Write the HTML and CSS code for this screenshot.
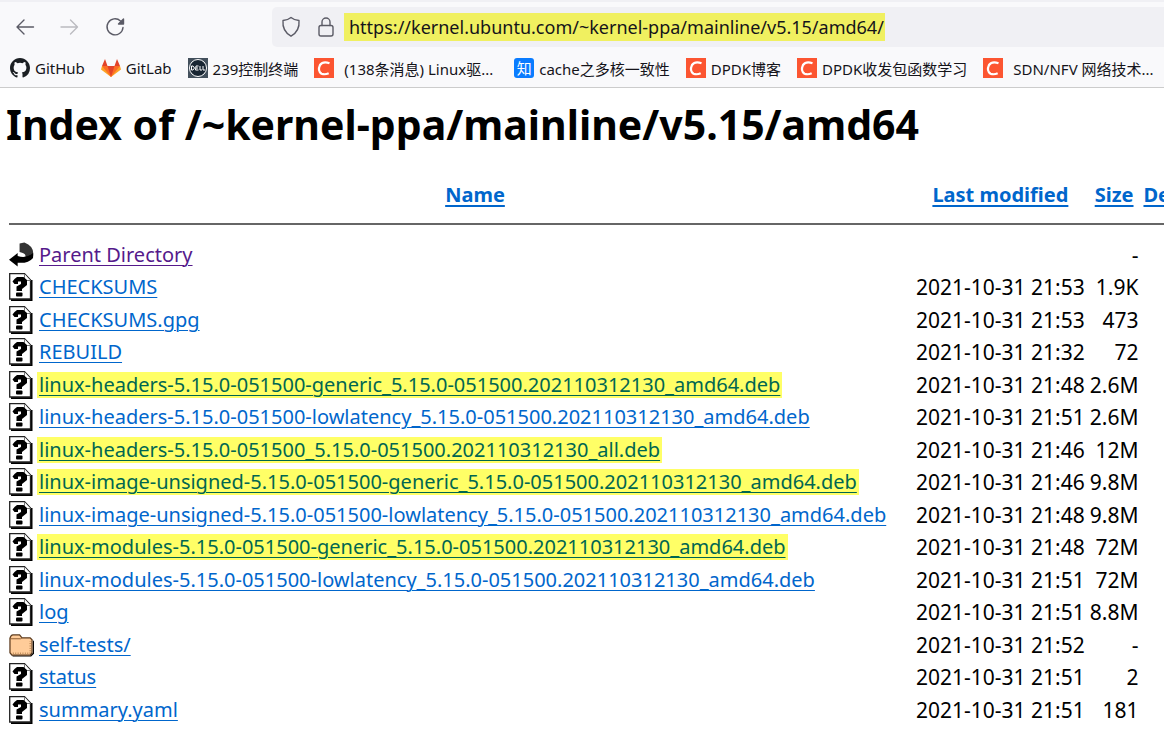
FILE: index.html
```html
<!DOCTYPE html>
<html lang="en">
<head>
  <meta charset="UTF-8">
  <meta name="viewport" content="width=device-width, initial-scale=1.0">
  <title>Index of /~kernel-ppa/mainline/v5.15/amd64</title>
  <link rel="stylesheet" href="styles.css">
</head>
<body>
  <!-- shared icons -->
  <svg class="sprite" width="0" height="0" aria-hidden="true">
    <symbol id="i-unknown" viewBox="0 0 24 28">
      <path d="M2 27H22.500V7" fill="none" stroke="#000" stroke-width="2"/>
      <path d="M0.700 0.700H15.500L21.500 7V26H0.700Z" fill="#fff" stroke="#222" stroke-width="1.300"/>
      <path d="M15.500 1V7.500H21.500" fill="#fff" stroke="#777" stroke-width="1"/>
      <path d="M3.500 8.500L5.500 6L8 4H14.500L18 7V12L13 16V18H7.500V13.500L12 11V8.500H9V11H5.500Z" fill="#000"/>
      <rect x="7" y="19.500" width="6.500" height="4" rx="1" fill="#000"/>
    </symbol>
    <symbol id="i-csdn" viewBox="0 0 20 20">
      <rect width="20" height="20" fill="#fc5531"/>
      <path d="M15.500 5.200Q9 2.700 6 7Q3.300 13 7.500 15.700Q11 17 14.700 15.200" fill="none" stroke="#fff" stroke-width="2.200"/>
    </symbol>
  </svg>

  <header class="chrome">
    <div class="toolbar">
      <div class="nav">
        <button aria-label="Back"><svg width="20" height="20" viewBox="0 0 20 20"><path d="M18.500 10H2M9 3L2 10L9 17"/></svg></button>
        <button aria-label="Forward" disabled><svg width="20" height="20" viewBox="0 0 20 20"><path d="M1 10H17.500M10.500 3L17.500 10L10.500 17"/></svg></button>
        <button aria-label="Reload"><svg width="20" height="20" viewBox="0 0 20 20"><path d="M15.500 4A8 8 0 1 0 18 10.500"/><path class="solid" d="M18.500 2V7H13.500Z"/></svg></button>
      </div>
      <div class="urlbar">
        <svg width="20" height="22" viewBox="0 0 20 22"><path d="M10 1.500Q13 4 18 4.500Q19 15 10 20.200Q1 15 2 4.500Q7 4 10 1.500Z"/></svg>
        <svg width="20" height="22" viewBox="0 0 20 22"><rect x="3" y="9.500" width="14" height="10.500" rx="2"/><path d="M6 9.500V6A4 4 0 0 1 14 6V9.500"/></svg>
        <input type="text" aria-label="Address" value="https://kernel.ubuntu.com/~kernel-ppa/mainline/v5.15/amd64/">
      </div>
    </div>
    <nav class="bookmarks">
      <a href="#"><svg width="20" height="20" viewBox="0 0 16 16"><path fill="#1b1f23" d="M8 0C3.580 0 0 3.580 0 8c0 3.540 2.290 6.530 5.470 7.590.4.070.55-.17.55-.38 0-.19-.01-.82-.01-1.490-2.010.37-2.530-.49-2.690-.94-.09-.23-.48-.94-.82-1.130-.28-.15-.68-.52-.01-.53.63-.01 1.080.58 1.230.82.72 1.210 1.870.87 2.330.66.07-.52.28-.87.51-1.070-1.780-.2-3.640-.89-3.640-3.950 0-.87.31-1.590.82-2.150-.08-.2-.36-1.020.08-2.120 0 0 .67-.21 2.200.82a7.600 7.600 0 0 1 4 0c1.530-1.040 2.200-.82 2.200-.82.44 1.100.16 1.920.08 2.120.51.56.82 1.270.82 2.150 0 3.070-1.870 3.750-3.650 3.950.29.25.54.73.54 1.480 0 1.070-.01 1.930-.01 2.200 0 .21.15.46.55.38A8 8 0 0 0 16 8c0-4.420-3.580-8-8-8z"/></svg>GitHub</a>
      <a href="#"><svg width="20" height="20" viewBox="0 0 20 20"><path fill="#fca326" d="M1 8L0 11.500L10 19L20 11.500L19 8Z"/><path fill="#fc6d26" d="M1 8H19L10 19Z"/><path fill="#e24329" d="M1 8L4 1L6.500 8H13.500L16 1L19 8L13.500 8L10 19L6.500 8Z"/></svg>GitLab</a>
      <a href="#"><svg width="20" height="20" viewBox="0 0 20 20"><rect width="20" height="20" fill="#43505c"/><circle cx="10" cy="10" r="8.500" fill="#182532" stroke="#fff"/><path d="M3.500 8V12H5Q8 10 5 8ZM10.500 8H8L7.500 12H10.500M8 10H10M12 8V12H14M15 8V12H17" fill="none" stroke="#fff"/></svg>239控制终端</a>
      <a href="#" class="wide"><svg width="20" height="20"><use href="#i-csdn"/></svg>(138条消息) Linux驱...</a>
      <a href="#"><span class="zhihu">知</span>cache之多核一致性</a>
      <a href="#"><svg width="20" height="20"><use href="#i-csdn"/></svg>DPDK博客</a>
      <a href="#"><svg width="20" height="20"><use href="#i-csdn"/></svg>DPDK收发包函数学习</a>
      <a href="#" class="wide"><svg width="20" height="20"><use href="#i-csdn"/></svg>SDN/NFV 网络技术...</a>
    </nav>
  </header>

  <main>
    <h1>Index of /~kernel-ppa/mainline/v5.15/amd64</h1>
    <table>
      <colgroup><col class="c-icon"><col class="c-name"><col class="c-date"><col class="c-size"><col></colgroup>
      <thead>
        <tr><th></th><th><a href="#">Name</a></th><th><a href="#">Last modified</a></th><th><a href="#">Size</a></th><th><a href="#">Description</a></th></tr>
        <tr><td colspan="5"><hr></td></tr>
      </thead>
      <tbody>
        <tr>
          <td><svg width="25" height="28" viewBox="0 0 26 28"><path d="M11 2L16 1Q27 5 25 16Q22 20 15 20Q21 13 11 11Z" fill="#333"/><path d="M0 19L9 12V15Q18 18 25 12V17Q20 23 9 22V26Z" fill="#000"/></svg></td>
          <td><a href="#" class="visited">Parent Directory</a></td><td></td><td class="size">-</td><td></td>
        </tr>
        <tr><td><svg width="24" height="28"><use href="#i-unknown"/></svg></td><td><a href="#">CHECKSUMS</a></td><td class="date">2021-10-31 21:53</td><td class="size">1.9K</td><td></td></tr>
        <tr><td><svg width="24" height="28"><use href="#i-unknown"/></svg></td><td><a href="#">CHECKSUMS.gpg</a></td><td class="date">2021-10-31 21:53</td><td class="size">473</td><td></td></tr>
        <tr><td><svg width="24" height="28"><use href="#i-unknown"/></svg></td><td><a href="#">REBUILD</a></td><td class="date">2021-10-31 21:32</td><td class="size">72</td><td></td></tr>
        <tr><td><svg width="24" height="28"><use href="#i-unknown"/></svg></td><td><a href="#" class="marked">linux-headers-5.15.0-051500-generic_5.15.0-051500.202110312130_amd64.deb</a></td><td class="date">2021-10-31 21:48</td><td class="size">2.6M</td><td></td></tr>
        <tr><td><svg width="24" height="28"><use href="#i-unknown"/></svg></td><td><a href="#">linux-headers-5.15.0-051500-lowlatency_5.15.0-051500.202110312130_amd64.deb</a></td><td class="date">2021-10-31 21:51</td><td class="size">2.6M</td><td></td></tr>
        <tr><td><svg width="24" height="28"><use href="#i-unknown"/></svg></td><td><a href="#" class="marked">linux-headers-5.15.0-051500_5.15.0-051500.202110312130_all.deb</a></td><td class="date">2021-10-31 21:46</td><td class="size">12M</td><td></td></tr>
        <tr><td><svg width="24" height="28"><use href="#i-unknown"/></svg></td><td><a href="#" class="marked">linux-image-unsigned-5.15.0-051500-generic_5.15.0-051500.202110312130_amd64.deb</a></td><td class="date">2021-10-31 21:46</td><td class="size">9.8M</td><td></td></tr>
        <tr><td><svg width="24" height="28"><use href="#i-unknown"/></svg></td><td><a href="#">linux-image-unsigned-5.15.0-051500-lowlatency_5.15.0-051500.202110312130_amd64.deb</a></td><td class="date">2021-10-31 21:48</td><td class="size">9.8M</td><td></td></tr>
        <tr><td><svg width="24" height="28"><use href="#i-unknown"/></svg></td><td><a href="#" class="marked">linux-modules-5.15.0-051500-generic_5.15.0-051500.202110312130_amd64.deb</a></td><td class="date">2021-10-31 21:48</td><td class="size">72M</td><td></td></tr>
        <tr><td><svg width="24" height="28"><use href="#i-unknown"/></svg></td><td><a href="#">linux-modules-5.15.0-051500-lowlatency_5.15.0-051500.202110312130_amd64.deb</a></td><td class="date">2021-10-31 21:51</td><td class="size">72M</td><td></td></tr>
        <tr><td><svg width="24" height="28"><use href="#i-unknown"/></svg></td><td><a href="#">log</a></td><td class="date">2021-10-31 21:51</td><td class="size">8.8M</td><td></td></tr>
        <tr>
          <td><svg width="25" height="28" viewBox="0 0 26 28"><path d="M3 25H22L25 22V9L26 10V23L23 26H4Z" fill="#000"/><path d="M1 7Q2 3.500 4 3.500H11L13.500 6.500H22L24 8.500V22L22 24.500H3L1 22Z" fill="#ffcc99" stroke="#5c3b1e" stroke-width="1.300"/><path d="M1 7.500H12L13.500 6.500" fill="none" stroke="#8a5a30"/><path d="M4 22.500H22V10" fill="none" stroke="#996633" stroke-dasharray="1 1.500"/></svg></td>
          <td><a href="#">self-tests/</a></td><td class="date">2021-10-31 21:52</td><td class="size">-</td><td></td>
        </tr>
        <tr><td><svg width="24" height="28"><use href="#i-unknown"/></svg></td><td><a href="#">status</a></td><td class="date">2021-10-31 21:51</td><td class="size">2</td><td></td></tr>
        <tr><td><svg width="24" height="28"><use href="#i-unknown"/></svg></td><td><a href="#">summary.yaml</a></td><td class="date">2021-10-31 21:51</td><td class="size">181</td><td></td></tr>
      </tbody>
    </table>
  </main>
</body>
</html>
```

FILE: styles.css
```css
* { box-sizing: border-box; }
body {
  margin: 0;
  background: #fff;
  color: #000;
  font-family: "Noto Sans", "Noto Sans CJK SC", sans-serif;
  font-size: 20px;
}
svg { display: block; flex-shrink: 0; }
.sprite { position: absolute; }

/* browser toolbar */
.chrome {
  background: #f9f9fb;
  border-top: 2px solid #f0f0f4;
  border-bottom: 1px solid #ccc;
  color: #15141a;
  overflow: hidden;
}
.toolbar {
  display: flex;
  align-items: center;
  padding-top: 5px;
}
.nav {
  display: flex;
  gap: 25px;
  width: 272px;
  padding-left: 15px;
  flex-shrink: 0;
}
.nav button {
  padding: 0;
  border: none;
  background: none;
}
.nav svg, .urlbar svg {
  fill: none;
  stroke: #5b5b66;
  stroke-width: 1.4;
  stroke-linecap: round;
  stroke-linejoin: round;
}
.nav button:disabled svg { stroke: #bbbbc0; }
.nav .solid { fill: #5b5b66; }
.urlbar {
  display: flex;
  align-items: center;
  flex: 1;
  height: 40px;
  padding-left: 9px;
  background: #f0f0f4;
  border-radius: 5px 0 0 5px;
}
.urlbar svg + svg { margin: 0 8px 0 15px; }
.urlbar input {
  width: 541px;
  height: 28px;
  padding: 0 0 0 5px;
  border: none;
  background: #f0f060;
  color: #15141a;
  font: inherit;
  font-size: 18px;
}

.bookmarks {
  display: flex;
  gap: 16px;
  padding: 7px 0 5px 10px;
  height: 40px;
  font-size: 15px;
  white-space: nowrap;
}
.bookmarks a {
  display: flex;
  align-items: center;
  gap: 5px;
  color: inherit;
  text-decoration: none;
}
.bookmarks .wide { gap: 10px; margin-right: 5px; }
.zhihu {
  width: 20px;
  line-height: 20px;
  border-radius: 3px;
  background: #0a7cff;
  color: #fff;
  text-align: center;
}

/* directory listing */
main {
  padding-left: 4px;
  overflow: hidden;
}
h1 {
  margin: 8px 0 27px 2px;
  font-size: 41px;
  line-height: 56px;
  white-space: nowrap;
}
table {
  width: max-content;
  border-spacing: 5px 0;
  line-height: 28px;
  white-space: nowrap;
}
th, td { padding: 0; }
thead th { height: 32px; }
tbody td { height: 33px; }
tbody tr:nth-child(even) td { height: 32px; }
.c-icon { width: 25px; }
.c-name { width: 872px; }
.c-date { width: 168px; }
.c-size { width: 48px; }
hr {
  margin: 12px 0 13px;
  border: none;
  border-top: 2px solid #666;
}
.date, .size {
  font-size: 21px;
  text-align: right;
}
main a {
  color: #0066cc;
  text-decoration-thickness: 1px;
  text-underline-offset: 3px;
}
thead a { text-decoration-thickness: 2px; }
main .visited { color: #551a8b; }
.marked {
  display: inline-block;
  margin: 0 -2px;
  padding: 0 2px;
  background: #ffff66;
  line-height: 26px;
}
main .marked { color: #006651; }
```
